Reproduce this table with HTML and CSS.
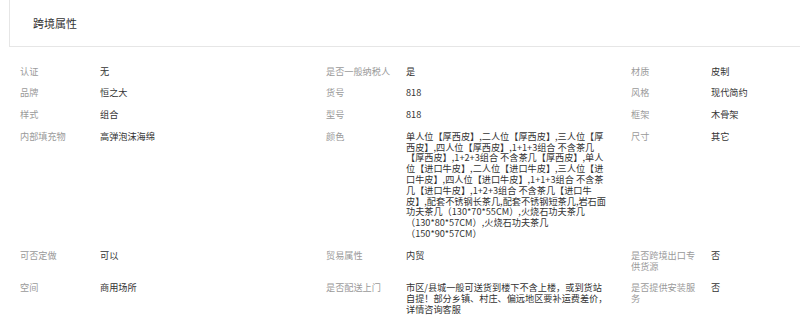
FILE: index.html
```html
<!DOCTYPE html>
<html lang="zh-CN">
<head>
<meta charset="utf-8">
<link rel="stylesheet" href="styles.css">
</head>
<body>
<div class="panel-head"><span class="panel-title">跨境属性</span></div>
<div class="attrs">
  <div class="lbl">认证</div><div class="val">无</div>
  <div class="lbl">是否一般纳税人</div><div class="val">是</div>
  <div class="lbl">材质</div><div class="val">皮制</div>

  <div class="lbl">品牌</div><div class="val">恒之大</div>
  <div class="lbl">货号</div><div class="val">818</div>
  <div class="lbl">风格</div><div class="val">现代简约</div>

  <div class="lbl">样式</div><div class="val">组合</div>
  <div class="lbl">型号</div><div class="val">818</div>
  <div class="lbl">框架</div><div class="val">木骨架</div>

  <div class="lbl">内部填充物</div><div class="val">高弹泡沫海绵</div>
  <div class="lbl">颜色</div><div class="val">单人位【厚西皮】,二人位【厚西皮】,三人位【厚西皮】,四人位【厚西皮】,1+1+3组合 不含茶几【厚西皮】,1+2+3组合 不含茶几【厚西皮】,单人位【进口牛皮】,二人位【进口牛皮】,三人位【进口牛皮】,四人位【进口牛皮】,1+1+3组合 不含茶几【进口牛皮】,1+2+3组合 不含茶几【进口牛皮】,配套不锈钢长茶几,配套不锈钢短茶几,岩石面功夫茶几（130*70*55CM）,火烧石功夫茶几（130*80*57CM）,火烧石功夫茶几（150*90*57CM）</div>
  <div class="lbl">尺寸</div><div class="val">其它</div>

  <div class="lbl">可否定做</div><div class="val">可以</div>
  <div class="lbl">贸易属性</div><div class="val">内贸</div>
  <div class="lbl">是否跨境出口专供货源</div><div class="val">否</div>

  <div class="lbl">空间</div><div class="val">商用场所</div>
  <div class="lbl">是否配送上门</div><div class="val">市区/县城一般可送货到楼下不含上楼，或到货站自提！部分乡镇、村庄、偏远地区要补运费差价，详情咨询客服</div>
  <div class="lbl">是否提供安装服务</div><div class="val">否</div>
</div>
</body>
</html>
```

FILE: styles.css
```css
html, body {
  margin: 0;
  padding: 0;
  background: #fff;
  font-family: "Noto Sans CJK SC", "Liberation Sans", sans-serif;
  overflow: hidden;
}

.panel-head {
  margin: -1px -10px 0 9px;
  height: 46px;
  border: 1px solid #e6e6e6;
  display: flex;
  align-items: center;
  padding-left: 23px;
}

.panel-title {
  font-size: 11px;
  color: #333;
  line-height: 14px;
}

.attrs {
  display: grid;
  grid-template-columns: 80px 226px 80px 225px 80px 1fr;
  padding: 13px 0 0 20px;
  font-size: 9.17px;
  line-height: 10.8px;
  text-spacing-trim: space-all;
}

.lbl, .val {
  padding: 5.5px 0;
}

.lbl {
  color: #9a9a9a;
  padding-right: 12px;
}

.val {
  color: #333;
  padding-right: 23px;
}
```
